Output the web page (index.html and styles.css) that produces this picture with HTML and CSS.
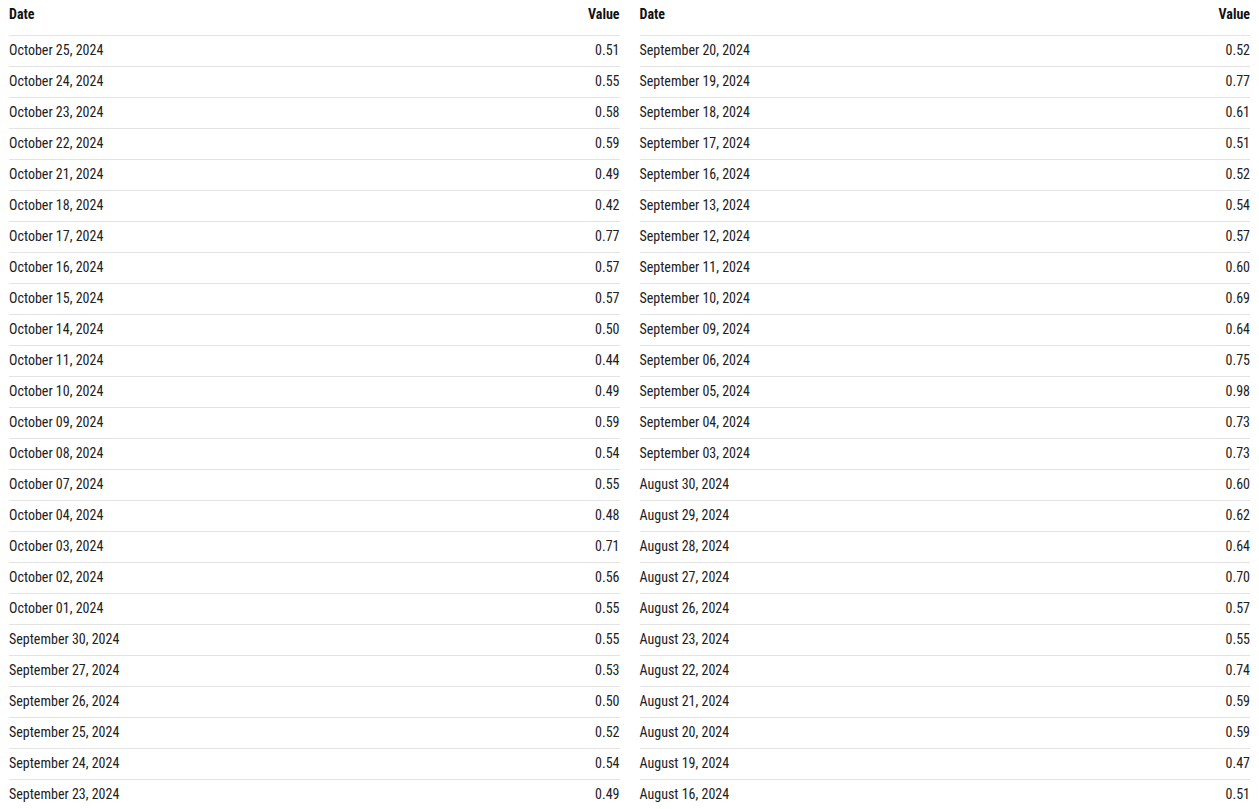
FILE: index.html
```html
<!DOCTYPE html>
<html>
<head>
<meta charset="utf-8">
<link rel="stylesheet" href="styles.css">
</head>
<body>
<div class="wrap">
<table class="tbl">
<thead><tr><th class="d">Date</th><th class="v">Value</th></tr></thead>
<tbody>
<tr><td>October 25, 2024</td><td class="v">0.51</td></tr>
<tr><td>October 24, 2024</td><td class="v">0.55</td></tr>
<tr><td>October 23, 2024</td><td class="v">0.58</td></tr>
<tr><td>October 22, 2024</td><td class="v">0.59</td></tr>
<tr><td>October 21, 2024</td><td class="v">0.49</td></tr>
<tr><td>October 18, 2024</td><td class="v">0.42</td></tr>
<tr><td>October 17, 2024</td><td class="v">0.77</td></tr>
<tr><td>October 16, 2024</td><td class="v">0.57</td></tr>
<tr><td>October 15, 2024</td><td class="v">0.57</td></tr>
<tr><td>October 14, 2024</td><td class="v">0.50</td></tr>
<tr><td>October 11, 2024</td><td class="v">0.44</td></tr>
<tr><td>October 10, 2024</td><td class="v">0.49</td></tr>
<tr><td>October 09, 2024</td><td class="v">0.59</td></tr>
<tr><td>October 08, 2024</td><td class="v">0.54</td></tr>
<tr><td>October 07, 2024</td><td class="v">0.55</td></tr>
<tr><td>October 04, 2024</td><td class="v">0.48</td></tr>
<tr><td>October 03, 2024</td><td class="v">0.71</td></tr>
<tr><td>October 02, 2024</td><td class="v">0.56</td></tr>
<tr><td>October 01, 2024</td><td class="v">0.55</td></tr>
<tr><td>September 30, 2024</td><td class="v">0.55</td></tr>
<tr><td>September 27, 2024</td><td class="v">0.53</td></tr>
<tr><td>September 26, 2024</td><td class="v">0.50</td></tr>
<tr><td>September 25, 2024</td><td class="v">0.52</td></tr>
<tr><td>September 24, 2024</td><td class="v">0.54</td></tr>
<tr><td>September 23, 2024</td><td class="v">0.49</td></tr>
</tbody>
</table>
<table class="tbl">
<thead><tr><th class="d">Date</th><th class="v">Value</th></tr></thead>
<tbody>
<tr><td>September 20, 2024</td><td class="v">0.52</td></tr>
<tr><td>September 19, 2024</td><td class="v">0.77</td></tr>
<tr><td>September 18, 2024</td><td class="v">0.61</td></tr>
<tr><td>September 17, 2024</td><td class="v">0.51</td></tr>
<tr><td>September 16, 2024</td><td class="v">0.52</td></tr>
<tr><td>September 13, 2024</td><td class="v">0.54</td></tr>
<tr><td>September 12, 2024</td><td class="v">0.57</td></tr>
<tr><td>September 11, 2024</td><td class="v">0.60</td></tr>
<tr><td>September 10, 2024</td><td class="v">0.69</td></tr>
<tr><td>September 09, 2024</td><td class="v">0.64</td></tr>
<tr><td>September 06, 2024</td><td class="v">0.75</td></tr>
<tr><td>September 05, 2024</td><td class="v">0.98</td></tr>
<tr><td>September 04, 2024</td><td class="v">0.73</td></tr>
<tr><td>September 03, 2024</td><td class="v">0.73</td></tr>
<tr><td>August 30, 2024</td><td class="v">0.60</td></tr>
<tr><td>August 29, 2024</td><td class="v">0.62</td></tr>
<tr><td>August 28, 2024</td><td class="v">0.64</td></tr>
<tr><td>August 27, 2024</td><td class="v">0.70</td></tr>
<tr><td>August 26, 2024</td><td class="v">0.57</td></tr>
<tr><td>August 23, 2024</td><td class="v">0.55</td></tr>
<tr><td>August 22, 2024</td><td class="v">0.74</td></tr>
<tr><td>August 21, 2024</td><td class="v">0.59</td></tr>
<tr><td>August 20, 2024</td><td class="v">0.59</td></tr>
<tr><td>August 19, 2024</td><td class="v">0.47</td></tr>
<tr><td>August 16, 2024</td><td class="v">0.51</td></tr>
</tbody>
</table>
</div>
</body>
</html>
```
FILE: styles.css
```css
html, body {
  margin: 0;
  padding: 0;
  background: #ffffff;
}
body {
  font-family: "Roboto Condensed", Roboto, "Liberation Sans", sans-serif;
  font-stretch: 75%;
  font-size: 14px;
  color: #212121;
}
.wrap {
  display: grid;
  grid-template-columns: 1fr 1fr;
  column-gap: 20px;
  padding: 6px 9px 0 9px;
}
.tbl {
  width: 100%;
  border-collapse: collapse;
}
.tbl th {
  font-weight: 700;
  line-height: 16px;
  padding: 0 0 13px 0;
  border-bottom: 1px solid #e3e3e3;
  text-align: left;
  color: #111;
}
.tbl td {
  line-height: 16px;
  height: 28px;
  padding: 0 0 2px 0;
  border-bottom: 1px solid #e3e3e3;
}
.tbl .v {
  text-align: right;
}
```
